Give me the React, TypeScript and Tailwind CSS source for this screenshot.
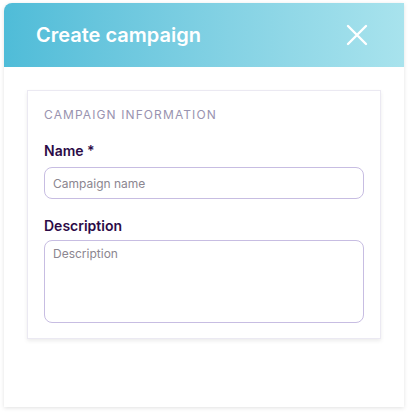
import React from 'react';

export default function App() {
  return (
    <div className="min-h-screen bg-white pt-[3px] pl-[4px]" style={{ fontFamily: 'Inter, "Noto Sans", sans-serif' }}>
      <div className="w-[400px] h-[404px] bg-white rounded-tl-[8px] shadow-[0_1px_4px_rgba(0,0,0,0.12)] flex flex-col">
        <div className="h-[64px] rounded-tl-[8px] bg-gradient-to-r from-[#4fbcd8] to-[#a8e3ed] flex items-center justify-between pl-[32px] pr-[36px]">
          <h1 className="text-white text-[20px] font-semibold">Create campaign</h1>
          <svg width="22" height="22" viewBox="0 0 22 22" fill="none" stroke="white" strokeWidth="2.4" strokeLinecap="round">
            <path d="M2 2 L20 20 M20 2 L2 20" />
          </svg>
        </div>
        <div className="pt-[23px] pl-[23px]">
          <div className="w-[354px] bg-white border border-[#ebe9f2] shadow-[0_2px_4px_rgba(0,0,0,0.08)] px-[16px] pt-[17px] pb-[15px]">
            <div className="text-[12px] text-[#9993b0] tracking-[1.1px] leading-[14px]">CAMPAIGN INFORMATION</div>
            <label className="block mt-[20px] text-[14px] font-semibold text-[#2c0b47] leading-[18px]">Name *</label>
            <input
              placeholder="Campaign name"
              className="mt-[7px] w-[320px] h-[32px] rounded-[8px] border border-[#c7bde2] px-[8px] text-[12px] text-[#333] placeholder:text-[#8b8690] outline-none"
            />
            <label className="block mt-[18px] text-[14px] font-semibold text-[#2c0b47] leading-[18px]">Description</label>
            <textarea
              placeholder="Description"
              className="block mt-[5px] w-[320px] h-[83px] rounded-[8px] border border-[#c7bde2] px-[8px] py-[4px] text-[12px] text-[#333] placeholder:text-[#8b8690] outline-none resize-none"
            />
          </div>
        </div>
      </div>
    </div>
  );
}
